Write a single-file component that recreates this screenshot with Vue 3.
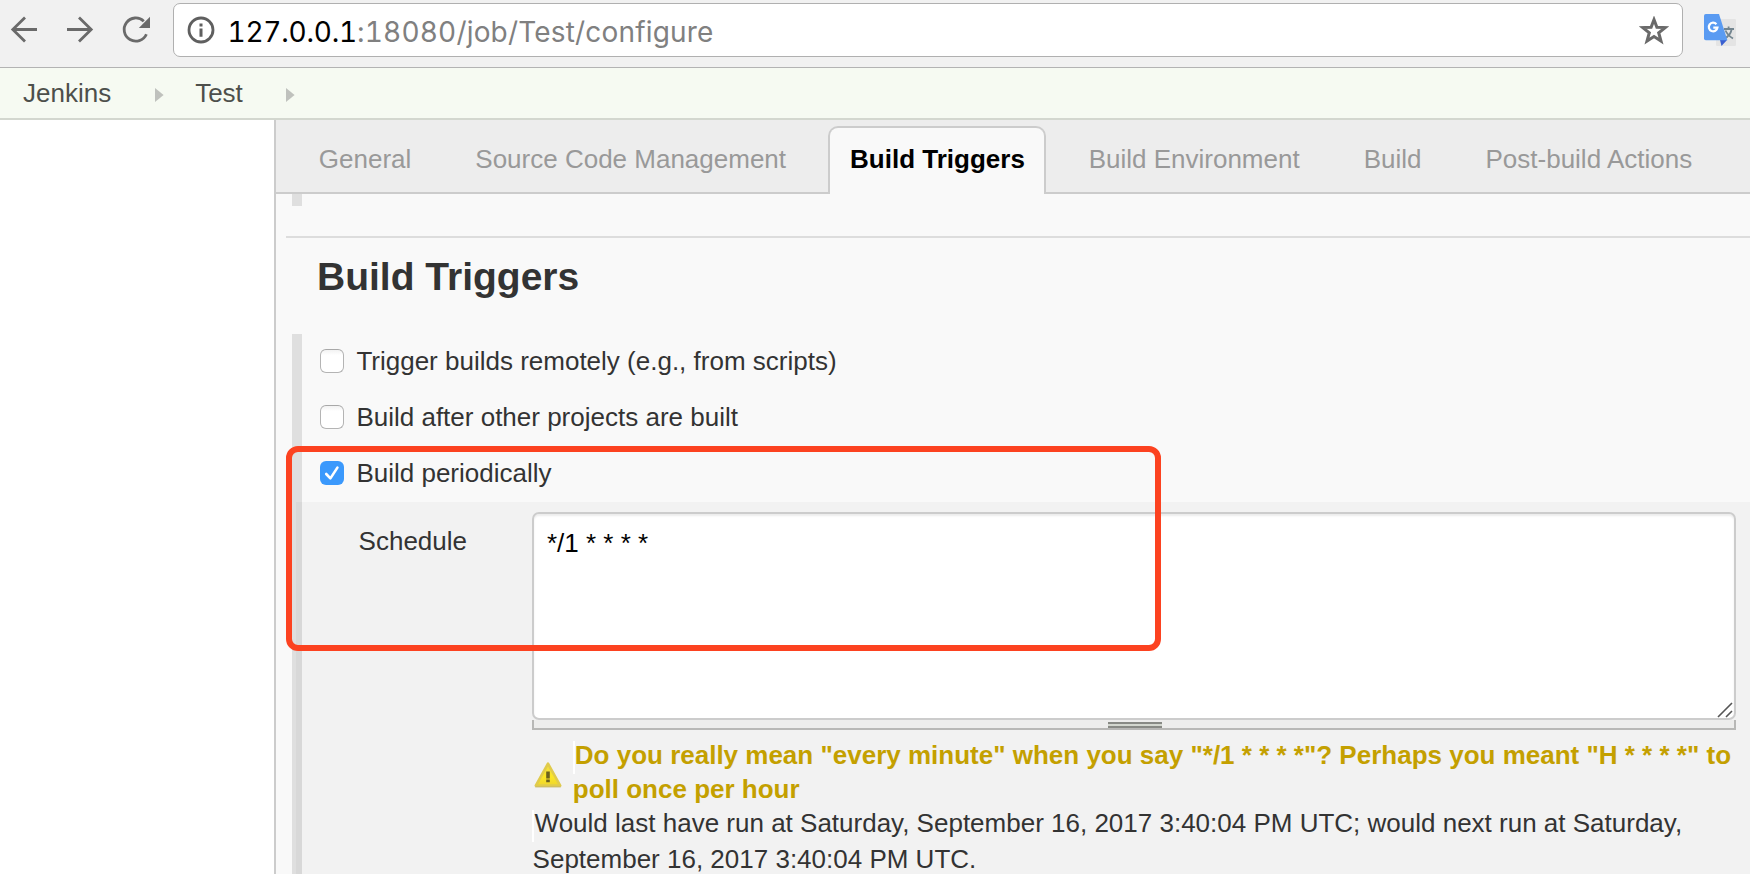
<script setup>
import { ref } from 'vue'

const crumbs = ['Jenkins', 'Test']
const tabs = ['General', 'Source Code Management', 'Build Triggers', 'Build Environment', 'Build', 'Post-build Actions']
const activeTab = ref('Build Triggers')
const triggers = ref([
  { label: 'Trigger builds remotely (e.g., from scripts)', on: false },
  { label: 'Build after other projects are built', on: false },
  { label: 'Build periodically', on: true },
])
const schedule = ref('*/1 * * * *')
</script>

<template>
  <div class="window">
    <header class="toolbar">
      <svg class="nav-icons" width="173" height="60" viewBox="0 0 173 60" fill="none" stroke="#6a6a6a" stroke-width="2.8">
        <path d="M37 29.5H13M25 17.5L12.8 29.5L25 41.5" />
        <path d="M67 29.5H91M79 17.5L91.2 29.5L79 41.5" />
        <path d="M146.4 34.2A11.6 11.6 0 1 1 143.8 21.2" />
        <path d="M150 16.8V28H138.8Z" fill="#6a6a6a" stroke="none" />
      </svg>
      <div class="omnibox">
        <svg class="info" width="28" height="28" viewBox="0 0 28 28">
          <circle cx="14" cy="14" r="12" fill="none" stroke="#5f5f5f" stroke-width="2.8" />
          <path d="M12.5 7.4h3v3h-3zM12.5 12.4h3v8.4h-3z" fill="#5f5f5f" />
        </svg>
        <span class="host">127.0.0.1</span><span class="path">:18080/job/Test/configure</span>
        <svg class="star" width="30" height="29" viewBox="0 0 30 29">
          <path d="M15 3.6L17.9 11.2L26.2 11.6L19.7 16.7L22 25L15 20.5L8 25L10.3 16.7L3.8 11.6L12.1 11.2Z" fill="none" stroke="#6a6a6a" stroke-width="3" />
        </svg>
      </div>
      <svg class="translate" width="34" height="34" viewBox="0 0 34 34">
        <rect x="12" y="5" width="20" height="27" rx="1" fill="#e4e4e4" />
        <path d="M20 15h10M24.6 12.5v2.5M27.6 15.5C26.8 19.5 24.5 22.5 20.5 24.6M21.5 16.5C23 20 25.5 22.5 29 24.6" fill="none" stroke="#73858f" stroke-width="1.8" />
        <path d="M16 26H23L17.5 32Z" fill="#3a5fd0" />
        <path d="M1.8 0H15L23.4 26.3H1.8Q0 26.3 0 24.5V1.8Q0 0 1.8 0Z" fill="#5a9bf2" />
        <path d="M12.4 10.2A4.3 4.3 0 1 0 13.4 13.6H9.3" fill="none" stroke="#fff" stroke-width="2.3" />
      </svg>
    </header>

    <nav class="breadcrumbs">
      <template v-for="crumb in crumbs" :key="crumb">
        <span>{{ crumb }}</span>
        <svg class="crumb-arrow" width="9" height="14" viewBox="0 0 9 14"><path d="M0 0L8.6 7L0 14Z" fill="#bfc1bd" /></svg>
      </template>
    </nav>

    <div class="body">
      <aside class="side"></aside>
      <main class="config">
        <div class="tabs">
          <div v-for="tab in tabs" :key="tab" class="tab" :class="{ active: tab === activeTab }">{{ tab }}</div>
        </div>
        <div class="previous-group"></div>
        <h1 class="section-title">Build Triggers</h1>
        <div class="group">
          <div class="rail"></div>
          <label v-for="t in triggers" :key="t.label" class="trigger">
            <span class="box" :class="{ on: t.on }">
              <svg v-if="t.on" width="24" height="24" viewBox="0 0 24 24"><path d="M6.2 13L10.4 17.4L17.4 6.6" fill="none" stroke="#fff" stroke-width="2.6" stroke-linecap="round" stroke-linejoin="round" /></svg>
            </span>
            <span>{{ t.label }}</span>
          </label>
          <div class="panel">
            <div class="field-label">Schedule</div>
            <div class="field">
              <div class="area">
                <textarea v-model="schedule" spellcheck="false"></textarea>
                <svg class="resizer" width="16" height="16" viewBox="0 0 16 16"><path d="M1 15L15 1M9 15L15 9" stroke="#555" stroke-width="1.6" /></svg>
              </div>
              <div class="handle"><span class="grip"></span></div>
              <div class="warning">
                <svg class="warn-icon" width="30" height="30" viewBox="0 0 30 30">
                  <defs>
                    <linearGradient id="warnFill" x1="0" y1="0" x2="0" y2="1">
                      <stop offset="0" stop-color="#efdc48" />
                      <stop offset="0.6" stop-color="#fbe626" />
                      <stop offset="1" stop-color="#efd62c" />
                    </linearGradient>
                  </defs>
                  <path d="M15 3.6L27.2 25.6H2.8Z" fill="url(#warnFill)" stroke="#e0cb4c" stroke-width="2.6" stroke-linejoin="round" />
                  <path d="M2.6 26.9H27.4" stroke="#c9b866" stroke-width="1" stroke-linecap="round" />
                  <path d="M13.2 11.5h3.6v7h-3.6zM13.2 19.6h3.6v2.6h-3.6z" fill="#6b611f" />
                </svg>
                <div class="warn-text">Do you really mean "every minute" when you say "*/1 * * * *"? Perhaps you meant "H * * * *" to<br>poll once per hour</div>
              </div>
              <div class="next-run">Would last have run at Saturday, September 16, 2017 3:40:04 PM UTC; would next run at Saturday,<br>September 16, 2017 3:40:04 PM UTC.</div>
            </div>
          </div>
        </div>
      </main>
    </div>
    <div class="highlight"></div>
  </div>
</template>

<style>
html, body { margin: 0; overflow: hidden; }
</style>

<style scoped>
.window {
  position: relative;
  width: 1750px;
  height: 874px;
  overflow: hidden;
  display: flex;
  flex-direction: column;
  background: #fff;
  color: #333;
  font: 26px/30px "Liberation Sans", Arial, sans-serif;
}
.toolbar {
  box-sizing: border-box;
  flex: none;
  height: 68px;
  display: flex;
  background: #f1f1f1;
  border-bottom: 1px solid #b3b3b3;
}
.nav-icons { flex: none; }
.omnibox {
  box-sizing: border-box;
  width: 1510px;
  height: 54px;
  margin-top: 3px;
  padding: 0 13px 0 13px;
  display: flex;
  align-items: center;
  background: #fff;
  border: 1px solid #b0b0b0;
  border-radius: 7px;
  font-family: Inter, sans-serif;
  font-size: 28px;
  font-variant-numeric: tabular-nums;
  white-space: nowrap;
}
.info { margin-right: 12.5px; }
.host, .path { padding-top: 3px; }
.host { color: #000; letter-spacing: -0.22px; }
.path { color: #808080; letter-spacing: 0.18px; }
.star { margin-left: auto; }
.translate { margin: 14px 0 0 21px; }
.breadcrumbs {
  flex: none;
  height: 50px;
  padding-left: 23px;
  display: flex;
  align-items: center;
  background: #f6faf2;
  border-bottom: 2px solid #d3d7cf;
  color: #4d4f4b;
}
.crumb-arrow { margin: 4px 31px 0 44px; }
.crumb-arrow:last-child { margin-left: 43px; }
.body { flex: 1; min-height: 0; display: flex; }
.side { width: 274px; flex: none; }
.config { flex: 1; min-width: 0; border-left: 2px solid #ccc; background: #f9f9f9; }
.tabs {
  height: 68px;
  padding: 6px 0 0 20.8px;
  box-sizing: content-box;
  display: flex;
  gap: 20px;
  background: linear-gradient(#ccc, #ccc) bottom / 100% 2px no-repeat #ededed;
}
.tab {
  box-sizing: border-box;
  height: 68px;
  padding: 0 20px;
  border: 2px solid transparent;
  border-bottom: 0;
  line-height: 62px;
  white-space: nowrap;
  color: #999;
}
.tab.active {
  padding-right: 19px;
  margin-right: 0.8px;
  background: #f9f9f9;
  border-color: #ccc;
  border-radius: 10px 10px 0 0;
  color: #000;
  font-weight: bold;
}
.previous-group {
  height: 42px;
  margin-left: 10px;
  border-bottom: 2px solid #ddd;
  background: linear-gradient(#dfdfdf, #dfdfdf) 6px 0 / 10px 12px no-repeat;
}
.section-title {
  margin: 0;
  height: 80px;
  box-sizing: content-box;
  padding: 16px 0 0 41px;
  font-size: 39px;
  line-height: 45px;
}
.group { position: relative; height: 540px; }
.rail {
  position: absolute;
  left: 16px;
  top: 0;
  bottom: 0;
  width: 10px;
  background: #dfdfdf;
}
.trigger {
  box-sizing: border-box;
  height: 56px;
  padding: 0 0 2px 44px;
  display: flex;
  align-items: center;
  gap: 12.4px;
}
.box {
  box-sizing: border-box;
  width: 24px;
  height: 24px;
  border: 1.5px solid #b4b4b4;
  border-top-color: #a8a8a8;
  border-radius: 6px;
  background: linear-gradient(#f2f2f2, #fff 5px);
}
.box.on { border: 0; background: #3b99fc; }
.box svg { display: block; }
.panel {
  position: relative;
  height: 372px;
  margin-left: 20px;
  display: flex;
  background: rgba(0, 0, 0, 0.027);
}
.field-label { box-sizing: border-box; width: 236px; padding: 24px 0 0 62.6px; }
.field { width: 1204px; padding-top: 10px; }
.area { position: relative; height: 208px; }
textarea {
  display: block;
  box-sizing: border-box;
  width: 100%;
  height: 208px;
  margin: 0;
  padding: 14px 13px;
  border: 2px solid #ccc;
  border-radius: 7px;
  outline: 0;
  resize: none;
  overflow: hidden;
  background: #fff;
  box-shadow: inset 0 2px 2px rgba(0, 0, 0, 0.075);
  color: #000;
  font: inherit;
}
.resizer { position: absolute; right: 3px; bottom: 2px; }
.handle {
  box-sizing: border-box;
  height: 10px;
  padding-top: 2px;
  border: 2px solid #b8b8b6;
  border-top: 0;
  background: #ededec;
}
.grip {
  display: block;
  width: 54px;
  height: 6px;
  margin: 0 0 0 574px;
  background: linear-gradient(#888a85 0 2px, #d3d7cf 2px 4px, #888a85 4px 6px);
}
.warning { display: flex; margin-top: 11px; height: 69px; }
.warn-icon { flex: none; margin: 19px 9.8px 0 1px; }
.warn-text {
  margin-top: -3px;
  height: 72px;
  color: #c4a000;
  font-weight: bold;
  line-height: 34px;
  white-space: nowrap;
  text-indent: 2px;
  background: linear-gradient(#fff, #fff) 0 3px / 2px 33px no-repeat;
}
.next-run {
  line-height: 36px;
  margin-top: -5px;
  padding-left: 0.6px;
  white-space: nowrap;
  text-indent: 2px;
  background: linear-gradient(#fff, #fff) 0 5px / 2px 32px no-repeat;
}
.highlight {
  position: absolute;
  left: 286px;
  top: 446px;
  box-sizing: border-box;
  width: 875px;
  height: 205px;
  border: 6px solid #fc4220;
  border-radius: 12px;
}
</style>
